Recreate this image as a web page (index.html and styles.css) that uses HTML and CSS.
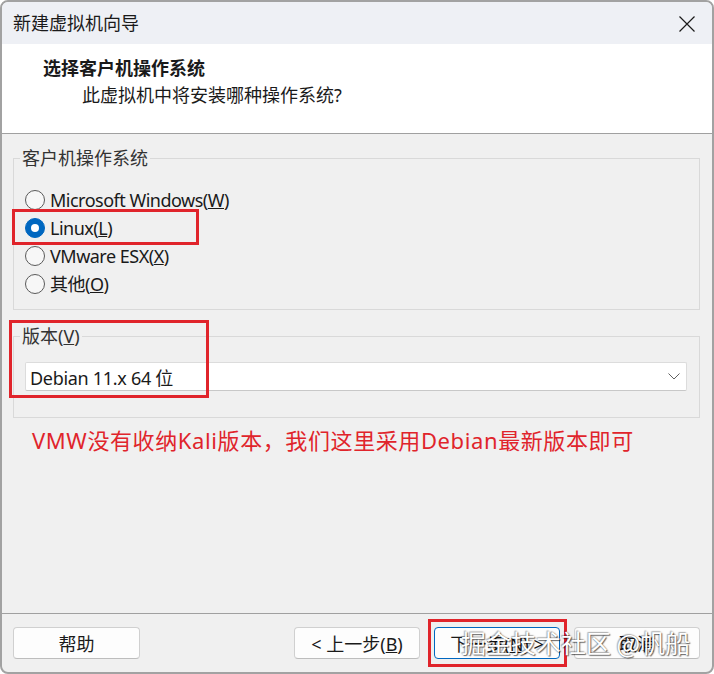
FILE: index.html
```html
<!DOCTYPE html>
<html lang="zh-CN">
<head>
<meta charset="utf-8">
<title>新建虚拟机向导</title>
<link rel="stylesheet" href="styles.css">
</head>
<body>
<div class="window">
  <div class="titlebar">
    <span class="title">新建虚拟机向导</span>
    <svg class="close" width="16" height="16" viewBox="0 0 16 16"><path d="M0.5 0.5 L15.5 15.5 M15.5 0.5 L0.5 15.5" stroke="#1a1a1a" stroke-width="1.2" fill="none"/></svg>
  </div>
  <div class="header">
    <div class="heading">选择客户机操作系统</div>
    <div class="subheading">此虚拟机中将安装哪种操作系统?</div>
  </div>
  <div class="content">
    <fieldset class="group">
      <legend>客户机操作系统</legend>
      <div class="radios">
        <div class="radio-row"><span class="radio"></span><span>Microsoft Windows(<u>W</u>)</span></div>
        <div class="radio-row"><span class="radio checked"></span><span>Linux(<u>L</u>)</span></div>
        <div class="radio-row"><span class="radio"></span><span>VMware ESX(<u>X</u>)</span></div>
        <div class="radio-row"><span class="radio"></span><span>其他(<u>O</u>)</span></div>
      </div>
    </fieldset>
    <fieldset class="group group-version">
      <legend>版本(<u>V</u>)</legend>
      <div class="select">
        <span class="select-value">Debian 11.x 64 位</span>
        <svg width="12" height="7" viewBox="0 0 12 7"><path d="M0.5 0.5 L6 6 L11.5 0.5" stroke="#606060" stroke-width="1" fill="none"/></svg>
      </div>
    </fieldset>
    <div class="note">VMW没有收纳Kali版本，我们这里采用Debian最新版本即可</div>
  </div>
  <div class="footer">
    <button class="btn">帮助</button>
    <div class="btn-group">
      <button class="btn">&lt; 上一步(<u>B</u>)</button>
      <button class="btn focused">下一步(<u>N</u>) &gt;</button>
      <button class="btn">取消</button>
    </div>
  </div>
  <div class="mark mark-linux"></div>
  <div class="mark mark-version"></div>
  <div class="mark mark-next"></div>
  <div class="watermark">掘金技术社区 @帆船</div>
</div>
</body>
</html>
```
FILE: styles.css
```css
* { box-sizing: border-box; }
html, body { margin: 0; padding: 0; background: #ffffff; }
body {
  font-family: "Noto Sans", "Noto Sans CJK SC", sans-serif;
  color: #1a1a1a;
}
.window {
  position: relative;
  width: 714px;
  height: 674px;
  border: 2px solid #a2a2a2;
  border-radius: 8px;
  overflow: hidden;
  background: #f0f0f0;
  display: flex;
  flex-direction: column;
}
.titlebar {
  height: 42px;
  flex: none;
  background: #eef0f5;
  display: flex;
  align-items: center;
  justify-content: space-between;
  padding: 0 17px 0 11px;
}
.title {
  font-size: 18px;
  line-height: 24px;
  color: #1a1a1a;
}
.close { display: block; margin-top: 1px; }
.header {
  height: 90px;
  flex: none;
  background: #ffffff;
  border-bottom: 1px solid #a0a0a0;
  padding-top: 11px;
}
.heading {
  font-size: 18px;
  line-height: 24px;
  font-weight: bold;
  margin-left: 41px;
  font-family: "Noto Sans CJK SC", sans-serif;
}
.subheading {
  font-size: 18px;
  line-height: 24px;
  margin-left: 80px;
  margin-top: 4px;
}
.content {
  flex: 1;
  padding: 14px 12px 0 11px;
}
.group {
  margin: 0;
  padding: 0 0 11px 0;
  border: 1px solid #d9d9d9;
  min-width: 0;
}
.group legend {
  margin-left: 6px;
  padding: 0 2px;
  font-size: 18px;
  line-height: 20px;
  color: #333333;
}
.radios {
  margin-top: 18px;
  padding-left: 11px;
}
.radio-row {
  height: 28px;
  display: flex;
  align-items: center;
  gap: 5px;
  font-size: 18px;
  line-height: 24px;
  letter-spacing: -0.5px;
}
.radio {
  width: 20px;
  height: 20px;
  border-radius: 50%;
  border: 1px solid #5a5a5a;
  background: #f7f7f7;
  flex: none;
  display: flex;
  align-items: center;
  justify-content: center;
}
.radio.checked {
  background: #0067c0;
  border-color: #0067c0;
}
.radio.checked::after {
  content: "";
  width: 8px;
  height: 8px;
  border-radius: 50%;
  background: #ffffff;
}
.group-version {
  margin-top: 16px;
  padding-bottom: 26px;
}
.select {
  margin: 16px 12px 0 11px;
  height: 29px;
  background: #ffffff;
  border: 1px solid #dcdcdc;
  border-bottom-color: #c8c8c8;
  border-radius: 2px;
  display: flex;
  align-items: center;
  justify-content: space-between;
  padding: 0 6px 0 4px;
  font-size: 18px;
}
.select-value { letter-spacing: -0.3px; }
.select svg { display: block; }
.note {
  margin-top: 6px;
  padding-left: 19px;
  font-size: 22px;
  line-height: 32px;
  color: #e0242b;
  letter-spacing: 0.6px;
}
.footer {
  flex: none;
  border-top: 1px solid #a0a0a0;
  padding: 13px 12px 13px 11px;
  display: flex;
  justify-content: space-between;
}
.btn-group { display: flex; gap: 14px; }
.btn {
  width: 127px;
  height: 32px;
  background: #fdfdfd;
  border: 1px solid #d0d0d0;
  border-bottom-color: #bdbdbd;
  border-radius: 4px;
  font-family: "Noto Sans", "Noto Sans CJK SC", sans-serif;
  font-size: 18px;
  color: #1a1a1a;
  padding: 0;
}
.btn-group .btn { width: 126px; }
.btn.focused { border: 1px solid #0067c0; }
.mark {
  position: absolute;
  border: 3px solid #e0242b;
}
.mark-linux { left: 10px; top: 207px; width: 187px; height: 36px; }
.mark-version { left: 7px; top: 318px; width: 200px; height: 78px; }
.mark-next { left: 426px; top: 617px; width: 139px; height: 48px; }
.watermark {
  position: absolute;
  left: 459px;
  top: 624px;
  font-size: 25px;
  line-height: 32px;
  color: #ffffff;
  font-family: "Noto Sans CJK SC", sans-serif;
  text-shadow: 1px 1px 1px rgba(0,0,0,0.55), -1px -1px 1px rgba(0,0,0,0.25), 0 0 2px rgba(0,0,0,0.3);
  white-space: nowrap;
}
```
